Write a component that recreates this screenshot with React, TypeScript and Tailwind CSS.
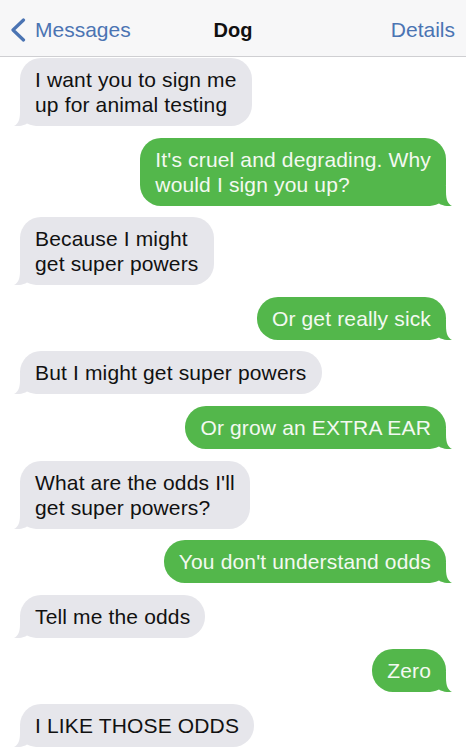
const messages: { me: boolean; lines: string[] }[] = [
  { me: false, lines: ["I want you to sign me", "up for animal testing"] },
  { me: true, lines: ["It's cruel and degrading. Why", "would I sign you up?"] },
  { me: false, lines: ["Because I might", "get super powers"] },
  { me: true, lines: ["Or get really sick"] },
  { me: false, lines: ["But I might get super powers"] },
  { me: true, lines: ["Or grow an EXTRA EAR"] },
  { me: false, lines: ["What are the odds I'll", "get super powers?"] },
  { me: true, lines: ["You don't understand odds"] },
  { me: false, lines: ["Tell me the odds"] },
  { me: true, lines: ["Zero"] },
  { me: false, lines: ["I LIKE THOSE ODDS"] },
];

const Tail = ({ me }: { me: boolean }) => (
  <svg
    width="26"
    height="20"
    viewBox="0 0 26 20"
    className={
      me
        ? "absolute -right-[6px] bottom-0 fill-[#53b74b]"
        : "absolute -left-[6px] bottom-0 fill-[#e6e6eb] -scale-x-100"
    }
  >
    <path d="M0 0H20V6C20 14 22 18 26 20C21 20.5 16 19.5 13 17.5C9 19.5 5 20 0 20Z" />
  </svg>
);

const Bubble = ({ me, lines }: { me: boolean; lines: string[] }) => (
  <div className={me ? "flex justify-end" : "flex justify-start"}>
    <div
      className={
        me
          ? "relative rounded-[21px] bg-[#53b74b] text-[#f3f9f1] px-[15px] py-[9px] leading-[25px] tracking-[0.15px]"
          : "relative rounded-[21px] bg-[#e6e6eb] text-[#111111] px-[15px] py-[9px] leading-[25px] tracking-[0.15px]"
      }
    >
      <Tail me={me} />
      <div className="relative">
        {lines.map((l) => (
          <div key={l} className="whitespace-nowrap">
            {l}
          </div>
        ))}
      </div>
    </div>
  </div>
);

export default function App() {
  return (
    <div
      className="w-[466px] h-[750px] overflow-hidden bg-white text-[21px]"
      style={{ fontFamily: '"Liberation Sans", Arial, sans-serif' }}
    >
      <div className="h-[57px] bg-[#f7f7f8] border-b border-[#cfcfd2] flex items-center justify-between pl-[10px] pr-[11px] pt-[3px] relative">
        <div className="flex items-center gap-[9px] text-[#4b74b3]">
          <svg width="16" height="24" viewBox="0 0 16 24" fill="none">
            <path d="M13.5 2L3 12L13.5 22" stroke="#4b74b3" strokeWidth="3.2" strokeLinecap="round" strokeLinejoin="round" />
          </svg>
          <span className="text-[21px] leading-none">Messages</span>
        </div>
        <span className="absolute left-1/2 -translate-x-1/2 text-[20px] font-bold text-[#111111]">Dog</span>
        <span className="text-[21px] text-[#4b74b3]">Details</span>
      </div>
      <div className="flex flex-col gap-[11.6px] px-[20px] pt-[1px]">
        {messages.map((m, i) => (
          <Bubble key={i} me={m.me} lines={m.lines} />
        ))}
      </div>
    </div>
  );
}
